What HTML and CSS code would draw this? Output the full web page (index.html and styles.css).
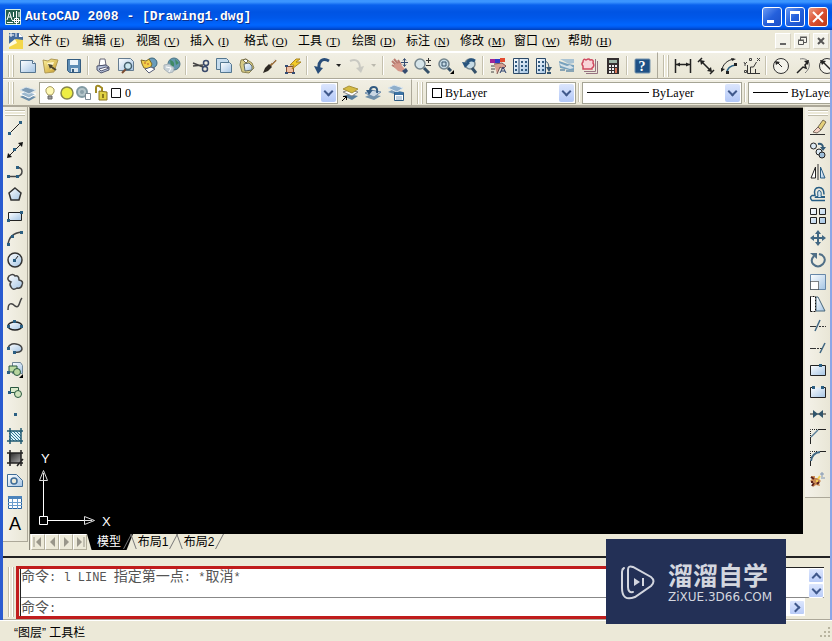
FILE: index.html
```html
<!DOCTYPE html>
<html lang="zh-CN">
<head>
    <meta charset="UTF-8">
    <meta name="viewport" content="width=device-width, initial-scale=1.0">
    <title>AutoCAD 2008 - [Drawing1.dwg]</title>
    <link rel="stylesheet" href="styles.css">
</head>
<body>
    <svg class="defs" width="0" height="0" aria-hidden="true">
        <defs>
            <linearGradient id="sky" x1="0" y1="0" x2="1" y2="1"><stop offset="0" stop-color="#fff"/><stop offset="1" stop-color="#a3c4e4"/></linearGradient>
            <linearGradient id="dark" x1="0" y1="0" x2="1" y2="1"><stop offset="0" stop-color="#222"/><stop offset="1" stop-color="#aaa"/></linearGradient>
            <linearGradient id="gold" x1="0" y1="0" x2="1" y2="1"><stop offset="0" stop-color="#fdf3a0"/><stop offset="1" stop-color="#c79a2a"/></linearGradient>
            <pattern id="hatch" width="3" height="3" patternUnits="userSpaceOnUse"><path d="M0 0l3 3" stroke="#2f7391"/></pattern>
        </defs>
    </svg>
    <div class="window">
        <header class="titlebar">
            <svg width="16" height="16" viewBox="0 0 16 16"><path fill="#27604f" stroke="#d6efe4" d="M.5.5h15v15H.5z"/><path d="M2 11L4.500 3 7 11M3 8h3M8.500 3v5M11.500 2v6M14 3v5M2 13.500h6" stroke="#fff" fill="none"/><path d="M9.500 9.500h4v4h-4z" stroke="#fff" fill="#173f36"/><path d="M11.500 7v9M7 11.500h9" stroke="#fff"/></svg>
            <h1>AutoCAD 2008 - [Drawing1.dwg]</h1>
            <button class="win-btn" aria-label="最小化"><svg width="18" height="18" viewBox="0 0 18 18"><path d="M4 12h7v3H4z" fill="#fff"/></svg></button>
            <button class="win-btn" aria-label="最大化"><svg width="18" height="18" viewBox="0 0 18 18"><path d="M4.500 4.500h9v9h-9z" fill="none" stroke="#fff"/><path d="M4 3h10v3H4z" fill="#fff"/></svg></button>
            <button class="win-btn close" aria-label="关闭"><svg width="18" height="18" viewBox="0 0 18 18"><path d="M4 4l10 10M14 4L4 14" stroke="#fff" stroke-width="2"/></svg></button>
        </header>

        <div class="frame">
            <nav class="menubar">
                <svg class="doc-icon" width="16" height="18" viewBox="0 0 16 18"><path d="M1 1h10l4 4v12H1z" fill="#446b9d"/><path d="M3 0v5M1 3h5M8 1v4" stroke="#fff"/><path d="M1 17v-5l7-5 7 1v9z" fill="#f4d74a"/><path d="M1 12l6-5 2 4-8 4z" fill="#fffbe0"/><path d="M11 1l4 4h-4z" fill="#fff"/></svg>
                <button>文件<span>(<u>F</u>)</span></button>
                <button>编辑<span>(<u>E</u>)</span></button>
                <button>视图<span>(<u>V</u>)</span></button>
                <button>插入<span>(<u>I</u>)</span></button>
                <button>格式<span>(<u>O</u>)</span></button>
                <button>工具<span>(<u>T</u>)</span></button>
                <button>绘图<span>(<u>D</u>)</span></button>
                <button>标注<span>(<u>N</u>)</span></button>
                <button>修改<span>(<u>M</u>)</span></button>
                <button>窗口<span>(<u>W</u>)</span></button>
                <button>帮助<span>(<u>H</u>)</span></button>
                <div class="mdi">
                    <button aria-label="最小化图形"><svg width="14" height="14" viewBox="0 0 14 14"><path d="M4 9h6v2H4z" fill="#666"/></svg></button>
                    <button aria-label="还原图形"><svg width="14" height="14" viewBox="0 0 14 14"><path d="M5.500 6V3.500h6v5H9M3.500 6.500h5v4h-5zM5 3h7M3 6h6" fill="none" stroke="#555"/></svg></button>
                    <button aria-label="关闭图形"><svg width="14" height="14" viewBox="0 0 14 14"><path d="M4 4l6 6M10 4l-6 6" stroke="#555" stroke-width="2"/></svg></button>
                </div>
            </nav>

            <div class="row">
                <div class="toolbar standard">
                    <i class="grip"></i>
                    <button aria-label="新建"><svg viewBox="0 0 18 18"><path d="M1.500 3.500h12l3 3v9h-15z" fill="url(#sky)" stroke="#56758f"/><path d="M13.500 3.500v3h3" fill="#fff" stroke="#56758f"/></svg></button>
                    <button aria-label="打开"><svg viewBox="0 0 18 18"><path d="M1 3l5 1 3-2 7 1-4 12-9 1z" fill="url(#gold)" stroke="#b09a55"/><path d="M5 6l7-1-3 8z" fill="#fff8cf"/><path d="M8 9l6 4" stroke="#4a432c" stroke-width="2"/><path d="M6 7l5 1-3 4z" fill="#4a432c"/></svg></button>
                    <button aria-label="保存"><svg viewBox="0 0 18 18"><path d="M2.500 2.500h13v13h-11l-2-2z" fill="#5e8db5" stroke="#345c80"/><path d="M5 3h8v5H5z" fill="#eef5fa"/><path d="M6 11h7v4H6z" fill="#dce7ef"/><path d="M7 12h2v3H7z" fill="#355b7e"/></svg></button>
                    <i class="sep"></i>
                    <button aria-label="打印"><svg viewBox="0 0 18 18"><path d="M5 9l1-7h5l1 6z" fill="#fff" stroke="#667"/><path d="M3 9l9-1 3 2v3l-8 3-4-3z" fill="#b9c5dc" stroke="#4d536d"/><path d="M5 12l7-2 3 1-8 3z" fill="#fff" stroke="#545872"/></svg></button>
                    <button aria-label="打印预览"><svg viewBox="0 0 18 18"><path d="M1.500 1.500h12l3 3v9h-15z" fill="url(#sky)" stroke="#657c90"/><path d="M9 12l-4 4" stroke="#7a4b31" stroke-width="2"/><circle cx="11" cy="9" r="3.500" fill="#cce7ef" stroke="#46616f" stroke-width="1.500"/></svg></button>
                    <button aria-label="发布"><svg viewBox="0 0 18 18"><circle cx="12" cy="6" r="5" fill="#6b9dbb" stroke="#3c657a"/><path d="M1 3l5 1 3-2 3 5-2 5-6-1-2-4z" fill="#f2cf4a" stroke="#7c6829"/><path d="M4 6h2M7 7h2" stroke="#bb5a2d"/><path d="M5 12l6-2 4 2-6 4z" fill="#fff" stroke="#555b74"/></svg></button>
                    <button aria-label="三维 DWF"><svg viewBox="0 0 18 18"><circle cx="11" cy="7" r="6" fill="#6297ad" stroke="#4b7587"/><path d="M7 3q5 1 4 6l-3 1zM12 2l4 4-3 2z" fill="#3f8a63"/><path d="M1 8l5-1 5 4-1 4-4 1-5-4z" fill="#c9d3d9" stroke="#a9b3b9"/><path d="M3 10l5 1-2 4" fill="none" stroke="#fff"/></svg></button>
                    <i class="sep"></i>
                    <button aria-label="剪切"><svg viewBox="0 0 18 18"><path d="M1 6l10 4M1 9l10-1" stroke="#444" stroke-width="1.500"/><circle cx="14" cy="6" r="2.500" fill="none" stroke="#39496b" stroke-width="1.500"/><circle cx="13" cy="12" r="2.500" fill="none" stroke="#39496b" stroke-width="1.500"/></svg></button>
                    <button aria-label="复制"><svg viewBox="0 0 18 18"><path d="M1.500 1.500h10l2 2v9h-12z" fill="#c6dced" stroke="#547790"/><path d="M5.500 5.500h9l2 2v8h-11z" fill="url(#sky)" stroke="#547790"/></svg></button>
                    <button aria-label="粘贴"><svg viewBox="0 0 18 18"><path d="M3 3l5-1 6 4 2 5-5 5-7-1-2-7z" fill="#d5c985" stroke="#8d8452"/><path d="M6 7l5-1 3 3v4l-7 1z" fill="url(#sky)" stroke="#626c68"/><path d="M5 3l3-1 2 2-2 2z" fill="#fff" stroke="#766d4d"/></svg></button>
                    <button aria-label="特性匹配"><svg viewBox="0 0 18 18"><path d="M15 3l-6 6" stroke="#9b713f" stroke-width="2"/><path d="M8 7l3 3-4 4-5 2 2-5z" fill="#2d2923"/><path d="M11 6l4-4" stroke="#ddd"/></svg></button>
                    <button aria-label="块编辑器"><svg viewBox="0 0 18 18"><path d="M2.500 9.500h7v6h-7z" fill="#f0bea0" stroke="#814c35"/><path d="M1 15h3v2H1zM8 15h3v2H8zM1 8h3v2H1z" fill="#344d75"/><path d="M12 2L6 8h4l-2 4 9-7h-5l4-3z" fill="#f3cb29" stroke="#a98522"/></svg></button>
                    <i class="sep"></i>
                    <button aria-label="放弃"><svg viewBox="0 0 18 18"><path d="M16 4C9 0 5 5 6 12" fill="none" stroke="#284d79" stroke-width="3"/><path d="M1 9l9 2-5 6z" fill="#284d79"/></svg></button>
                    <button class="drop" aria-label="放弃列表"><svg viewBox="0 0 8 18"><path d="M1 7h5l-2 3z" fill="#222"/></svg></button>
                    <button aria-label="重做"><svg viewBox="0 0 18 18"><path d="M2 4c7-3 10 1 10 8" fill="none" stroke="#c9c9c2" stroke-width="2"/><path d="M8 11l8-2-3 7z" fill="#c9c9c2"/></svg></button>
                    <button class="drop" aria-label="重做列表"><svg viewBox="0 0 8 18"><path d="M1 7h5l-2 3z" fill="#bbb9ae"/></svg></button>
                    <i class="sep wide"></i>
                    <button aria-label="实时平移"><svg viewBox="0 0 18 18"><path d="M1 4l5 5M3 2l5 6M7 3l3 5M1 8l5 3" stroke="#b97a70" stroke-width="2"/><path d="M4 7l5-1 3 4 2 2-3 3-4-1-4-4z" fill="#d59789"/><path d="M11 14l4-3 2 3-3 3z" fill="#344b70"/><path d="M13.500 2v7M10 5.500h7M12 3.500l1.500-2 1.500 2M12 7.500l1.500 2 1.500-2" fill="none" stroke="#344b70"/></svg></button>
                    <button aria-label="实时缩放"><svg viewBox="0 0 18 18"><circle cx="6" cy="7" r="5" fill="#d5e4e9" stroke="#75868e" stroke-width="1.500"/><path d="M10 11l5 5" stroke="#345069" stroke-width="3"/><path d="M14.500 1v5M12 3.500h5M12 8.500h5" stroke="#333"/></svg></button>
                    <button aria-label="窗口缩放"><svg viewBox="0 0 18 18"><circle cx="7" cy="7" r="5" fill="#c6dbe5" stroke="#75868e" stroke-width="1.500"/><path d="M5 5h4v4H5z" fill="none" stroke="#345069"/><path d="M11 11l3 3" stroke="#345069" stroke-width="3"/><path d="M17 13v4h-4z" fill="#000"/></svg></button>
                    <button aria-label="缩放上一个"><svg viewBox="0 0 18 18"><circle cx="10" cy="7" r="5" fill="#c6dbe5" stroke="#75868e" stroke-width="1.500"/><path d="M12 11l4 5" stroke="#345069" stroke-width="3"/><path d="M15 4Q10 1 7 6" fill="none" stroke="#28547d" stroke-width="3"/><path d="M2 5l8 1-5 5z" fill="#28547d"/></svg></button>
                    <i class="sep"></i>
                    <button aria-label="特性"><svg viewBox="0 0 18 18"><path d="M1 2h5v4H1z" fill="#a02598"/><path d="M6 2h5v4H6z" fill="#303cc8"/><path d="M11 1h5v4h-5z" fill="#e34b2f"/><path d="M2 9h5M2 12h4M2 15h3" stroke="#444"/><path d="M5 7l8-1 4 3-3 3-3-2-3 7" fill="#d7a091" stroke="#795755"/><path d="M11 16l3-6 3 6M12 14h4" fill="none" stroke="#273c6c"/></svg></button>
                    <button aria-label="设计中心"><svg viewBox="0 0 18 18"><path d="M1.500 1.500h15v15h-15z" fill="url(#sky)" stroke="#2b4968"/><path d="M7 2v15" stroke="#2b4968"/><path d="M3 4h2v2H3zM3 8h2v2H3zM3 12h2v2H3zM9 4h2v2H9zM13 4h2v2h-2zM9 8h2v2H9zM13 8h2v2h-2zM9 12h2v2H9zM13 12h2v2h-2z" fill="#315b80"/></svg></button>
                    <button aria-label="工具选项板"><svg viewBox="0 0 18 18"><path d="M1.500 1.500h9v15h-9z" fill="url(#sky)" stroke="#2b4968"/><path d="M3 4h2v2H3zM3 8h2v2H3zM3 12h2v2H3zM7 4h2v2H7zM7 8h2v2H7zM7 12h2v2H7z" fill="#315b80"/><path d="M10 4q4 1 4 8" fill="none" stroke="#365671"/><path d="M11 10l3 5 3-5zM12 15h4v2h-4z" fill="#365671"/></svg></button>
                    <button aria-label="图纸集"><svg viewBox="0 0 18 18"><path d="M2 2h14v4l-5 1z" fill="#a9c3d3"/><path d="M1 4l9 3 6 1v6L2 11z" fill="#77a1bd"/><path d="M1 6l8 3 3-1 4 3-4 1-9-3z" fill="#d6e1e7"/><path d="M8 14h8M2 13h5" stroke="#88a4b4" stroke-width="2"/></svg></button>
                    <button aria-label="标记集"><svg viewBox="0 0 18 18"><path d="M5 16.500h11.500V4" fill="none" stroke="#967381"/><path d="M3 14.500h11.500V2" fill="none" stroke="#967381"/><path d="M2 12V9q-2-2 0-4 0-4 3-2 3-2 4 0 4-1 3 3 2 3-1 5v1z" fill="#f9d5d9" stroke="#cf4a60" stroke-width="1.500"/></svg></button>
                    <button aria-label="快速计算器"><svg viewBox="0 0 18 18"><path d="M3 1h12v16H3z" fill="#352f30"/><path d="M5 3h8v3H5z" fill="#9db5a6"/><path d="M5 8h2v2H5zM8 8h2v2H8zM11 8h2v2h-2zM5 11h2v2H5zM8 11h2v2H8zM5 14h2v2H5zM8 14h2v2H8z" fill="#eee"/><path d="M11 11h2v5h-2z" fill="#d87357"/></svg></button>
                    <i class="sep"></i>
                    <button aria-label="帮助"><svg viewBox="0 0 18 18"><rect x="2" y="2" width="15" height="14" rx="1" fill="#1e5085" stroke="#7493ad"/><text x="9" y="14" text-anchor="middle" class="help-mark">?</text></svg></button>
                </div>
                <div class="toolbar dimension">
                    <i class="grip"></i>
                    <button aria-label="线性标注"><svg viewBox="0 0 18 18"><path d="M1.500 2v14M16.500 2v14M2 7.500h14" stroke="#222" stroke-width="1.500"/><path d="M2 7.500l4-2v4zM16 7.500l-4-2v4z" fill="#222"/></svg></button>
                    <button aria-label="对齐标注"><svg viewBox="0 0 18 18"><path d="M1 5l4-4M13 17l4-4M4 4l10 10" stroke="#222" stroke-width="1.500"/><path d="M3 3l5 1-4 4zM15 15l-5-1 4-4z" fill="#222"/></svg></button>
                    <button aria-label="弧长标注"><svg viewBox="0 0 18 18"><path d="M2 14C2 8 7 3 14 2" fill="none" stroke="#222"/><path d="M7 16q0-7 9-8" fill="none" stroke="#286083" stroke-width="1.500"/><path d="M1 15l0-4 4 1zM16 2l-5-1 1 3zM6 14h3v3H6zM14 6h3v3h-3z" fill="#222"/></svg></button>
                    <button aria-label="坐标标注"><svg viewBox="0 0 18 18"><path d="M4.500 8v8.500H17M7.500 16v-6h3l3-5M12.500 12v4" fill="none" stroke="#333"/><path d="M1 5l1 2 2-2M2 7v2M1.500 13.500h2v2h-2zM6.500 1.500h2v2h-2zM14 1l3 3M17 1l-3 3" fill="none" stroke="#444"/></svg></button>
                    <i class="sep"></i>
                    <button aria-label="半径标注"><svg viewBox="0 0 18 18"><circle cx="9" cy="9" r="7.500" fill="#f4f3eb" stroke="#333"/><path d="M10 10L5 5" stroke="#222"/><path d="M3 4l5 1-4 3z" fill="#222"/></svg></button>
                    <button aria-label="折弯标注"><svg viewBox="0 0 18 18"><path d="M5 2c9-2 13 7 5 14" fill="none" stroke="#777"/><path d="M2 16l6-6 3 1-1-3 3-3" fill="none" stroke="#222" stroke-width="1.500"/><path d="M14 3l-5 1 4 4z" fill="#222"/></svg></button>
                    <button aria-label="直径标注"><svg viewBox="0 0 18 18"><circle cx="9" cy="9" r="7.500" fill="#f4f3eb" stroke="#333"/><path d="M4 4l10 10" stroke="#222" stroke-width="1.500"/><path d="M2 3l6 1-4 4z" fill="#222"/></svg></button>
                </div>
            </div>

            <div class="row">
                <div class="toolbar layers">
                    <i class="grip"></i>
                    <button aria-label="图层特性管理器"><svg viewBox="0 0 18 18"><path d="M1 13l6-3 10 3-7 4z" fill="#6a8daa"/><path d="M1 10l6-3 10 3-7 4z" fill="#9db9cf" stroke="#fff"/><path d="M1 6l6-3 10 3-7 4z" fill="#7f9db7" stroke="#dce7ee"/></svg></button>
                    <div class="combo layer-combo">
                        <svg width="81" height="18" viewBox="0 0 81 18" aria-hidden="true">
                            <path d="M7 11q-3-3-2-6 4-5 8 0 1 3-2 6z" fill="#fff9b5" stroke="#a79c62"/><path d="M7 12h4v3H7z" fill="#999" stroke="#666"/>
                            <circle cx="26" cy="9" r="6" fill="#eeee43" stroke="#86864b" stroke-width="1.500"/>
                            <circle cx="41" cy="8" r="5" fill="#b5c6ca" stroke="#819aa2" stroke-width="2"/><circle cx="41" cy="8" r="2" fill="#8aa0a8"/><path d="M44.500 9.500h5v6h-5z" fill="#fff" stroke="#7b8992"/>
                            <path d="M55 9V4q0-3 3-2l3 2v3" fill="none" stroke="#a08a22" stroke-width="2"/><path d="M58 7l8 1v8h-8z" fill="#e1d244" stroke="#8b7620"/><path d="M61 10h2v4h-2z" fill="#8a7a1e"/>
                            <path d="M70.500 4.500h9v9h-9z" fill="#fff" stroke="#111"/>
                        </svg>
                        <select aria-label="图层"><option>0</option></select>
                        <span class="arrow"></span>
                    </div>
                    <button aria-label="将对象的图层置为当前"><svg viewBox="0 0 18 18"><path d="M2 12l6-2 9 2-6 4z" fill="#597f9d"/><path d="M2 8l6-2 9 2-6 4z" fill="#fff" stroke="#888"/><path d="M2 5l6-3 9 3-6 4z" fill="#d5bb43" stroke="#a8923c"/><path d="M1 17l4-4M2 12.500h3.500V16" fill="none" stroke="#000"/></svg></button>
                    <button aria-label="上一个图层"><svg viewBox="0 0 18 18"><path d="M1 13l6-3 10 2-7 4z" fill="#7191aa"/><path d="M1 9l6-3 10 2-7 5z" fill="#cad8e4" stroke="#6f8dab"/><path d="M13 9q1-6-3-6-4 0-4 4" fill="none" stroke="#315a81" stroke-width="2"/><path d="M2 6h7l-4 5z" fill="#315a81"/></svg></button>
                    <button aria-label="图层状态管理器"><svg viewBox="0 0 18 18"><path d="M1 8l6-3 9 3-6 3z" fill="#7a9bb6"/><path d="M1 4l6-3 9 3-6 4z" fill="#8eaecb" stroke="#dce7ef"/><path d="M7.500 8.500h9v8h-9z" fill="#fff" stroke="#2c5a82"/><path d="M8 8h8v3H8z" fill="#3b73a4"/><path d="M9 13h6M9 15h6" stroke="#83a5c0"/></svg></button>
                </div>
                <div class="toolbar properties">
                    <i class="grip"></i>
                    <div class="combo">
                        <i class="swatch"></i>
                        <select aria-label="颜色控制"><option>ByLayer</option></select>
                        <span class="arrow"></span>
                    </div>
                    <i class="sep"></i>
                    <div class="combo linetype">
                        <i class="line"></i>
                        <select aria-label="线型控制"><option>ByLayer</option></select>
                        <span class="arrow"></span>
                    </div>
                    <i class="sep"></i>
                    <div class="combo">
                        <i class="line short"></i>
                        <select aria-label="线宽控制"><option>ByLayer</option></select>
                    </div>
                </div>
            </div>

            <main class="workspace">
                <div class="side left">
                    <i class="grip"></i>
                    <button aria-label="直线"><svg viewBox="0 0 18 18"><path d="M3 15L15 3" stroke="#222"/><path d="M2 13h3v3H2zM13 2h3v3h-3z" fill="#2b5f82"/></svg></button>
                    <button aria-label="构造线"><svg viewBox="0 0 18 18"><path d="M2 16L16 2" stroke="#222"/><path d="M1 17l1-5 4 4zM17 1l-5 1 4 4z" fill="#111"/><path d="M7 7h3v3H7z" fill="#2b5f82"/></svg></button>
                    <button aria-label="多段线"><svg viewBox="0 0 18 18"><path d="M3 13.500h8M11 4.500q5 0 5 4t-5 5" fill="none" stroke="#444" stroke-width="1.500"/><path d="M1 12h3v3H1zM10 12h3v3h-3zM10 3h3v3h-3z" fill="#2b5f82"/></svg></button>
                    <button aria-label="正多边形"><svg viewBox="0 0 18 18"><path d="M9 3l6 5-2 7H5L3 8z" fill="url(#sky)" stroke="#333" stroke-width="1.500"/></svg></button>
                    <button aria-label="矩形"><svg viewBox="0 0 18 18"><path d="M2.500 5.500h13v8h-13z" fill="url(#sky)" stroke="#222"/><path d="M1 12h3v3H1zM14 4h3v3h-3z" fill="#2b5f82"/></svg></button>
                    <button aria-label="圆弧"><svg viewBox="0 0 18 18"><path d="M2 16Q3 4 16 3" fill="none" stroke="#444" stroke-width="1.500"/><path d="M1 14h3v3H1zM5 6h3v3H5zM14 2h3v3h-3z" fill="#2b5f82"/></svg></button>
                    <button aria-label="圆"><svg viewBox="0 0 18 18"><circle cx="9" cy="9" r="7" fill="url(#sky)" stroke="#333" stroke-width="1.500"/><path d="M9 9l3-4" stroke="#222"/><path d="M7 8h3v3H7z" fill="#2b5f82"/></svg></button>
                    <button aria-label="修订云线"><svg viewBox="0 0 18 18"><path d="M5 9Q0 7 3 3q4-3 6 0 4-1 4 4 5 1 3 5-1 4-5 3-4 3-6-1-2-3 0-5z" fill="url(#sky)" stroke="#444" stroke-width="1.500"/></svg></button>
                    <button aria-label="样条曲线"><svg viewBox="0 0 18 18"><path d="M2 15c0-8 4-7 7-4 5 3 4-5 7-8" fill="none" stroke="#444" stroke-width="1.500"/></svg></button>
                    <button aria-label="椭圆"><svg viewBox="0 0 18 18"><ellipse cx="9" cy="9" rx="7" ry="4" fill="url(#sky)" stroke="#222" stroke-width="1.500"/><path d="M1 8h3v3H1zM7 3h3v3H7zM14 8h3v3h-3z" fill="#2b5f82"/></svg></button>
                    <button aria-label="椭圆弧"><svg viewBox="0 0 18 18"><path d="M2 9q2-5 8-4 6 1 6 5-1 4-7 3z" fill="url(#sky)"/><path d="M2 9q2-5 8-4 6 1 6 5-1 4-7 3" fill="none" stroke="#444" stroke-width="1.500"/><path d="M1 8h3v3H1zM7 12h3v3H7z" fill="#2b5f82"/></svg></button>
                    <button aria-label="插入块"><svg viewBox="0 0 18 18"><path d="M6.500 1.500h8l2 3v8h-10z" fill="url(#sky)" stroke="#718697"/><path d="M3 5h8v6H3z" fill="#bddca3" stroke="#2a5940"/><circle cx="11" cy="11" r="3.500" fill="#b7d59e" stroke="#2a5940"/><path d="M1 10h3v3H1z" fill="#2b5f82"/><path d="M17 13v4h-4z" fill="#000"/></svg></button>
                    <button aria-label="创建块"><svg viewBox="0 0 18 18"><path d="M4.500 4.500h8v5h-8z" fill="#dbeacb" stroke="#2a5940"/><circle cx="12" cy="11" r="3.500" fill="#cfe3bd" stroke="#2a5940"/><path d="M2 8h3v3H2z" fill="#2b5f82"/></svg></button>
                    <button aria-label="点"><svg viewBox="0 0 18 18"><path d="M8 8h3v3H8z" fill="#2b5f82"/></svg></button>
                    <button aria-label="图案填充"><svg viewBox="0 0 18 18"><path d="M3 4h12v10H3z" fill="#def2f9"/><path d="M3 4h12v10H3z" fill="url(#hatch)"/><path d="M1 4h16M1 14h16M4 1v16M15 1v16" stroke="#205971" stroke-width="1.500"/></svg></button>
                    <button aria-label="渐变色"><svg viewBox="0 0 18 18"><path d="M3 4h12v10H3z" fill="url(#dark)"/><path d="M1 4h16M1 14h16M4 1v16M15 1v16M11 17l6-7" stroke="#222" stroke-width="1.500"/></svg></button>
                    <button aria-label="面域"><svg viewBox="0 0 18 18"><path d="M1.500 3.500h9l6 6v6h-15z" fill="url(#sky)" stroke="#3e6c97"/><circle cx="8" cy="10" r="3" fill="#ece9d8" stroke="#3e6c97" stroke-width="1.500"/></svg></button>
                    <button aria-label="表格"><svg viewBox="0 0 18 18"><path d="M2.500 3.500h13v12h-13z" fill="#fff" stroke="#28639f"/><path d="M2 3h14v3H2z" fill="#4b83bb"/><path d="M2 9.500h14M2 12.500h14M6.500 6v10M11.500 6v10" stroke="#6b9dcc"/></svg></button>
                    <button class="text-tool" aria-label="多行文字">A</button>
                </div>

                <section class="document">
                    <div class="canvas">
                        <svg class="ucs" width="84" height="78" viewBox="0 0 84 78">
                            <path d="M9.500 63.500h8v8h-8zM13.500 63V24M18 67.500h36" fill="none" stroke="#fff"/>
                            <path d="M9.500 27.500h8l-4-10zM54.500 63.500v8l10-4zM13.500 27V20M54 67.500h8" fill="none" stroke="#ddd"/>
                            <text x="11" y="10">Y</text>
                            <text x="72" y="73">X</text>
                        </svg>
                    </div>
                    <div class="tabs">
                        <button class="nav" aria-label="第一个"><svg viewBox="0 0 12 12"><path d="M2 1v10" stroke="#99968a"/><path d="M9 1v10L4 6z" fill="#99968a"/></svg></button>
                        <button class="nav" aria-label="上一个"><svg viewBox="0 0 12 12"><path d="M9 1v10L4 6z" fill="#99968a"/></svg></button>
                        <button class="nav" aria-label="下一个"><svg viewBox="0 0 12 12"><path d="M4 1v10l5-5z" fill="#99968a"/></svg></button>
                        <button class="nav" aria-label="最后一个"><svg viewBox="0 0 12 12"><path d="M10 1v10" stroke="#99968a"/><path d="M3 1v10l5-5z" fill="#99968a"/></svg></button>
                        <button class="tab active">模型</button>
                        <button class="tab">布局1</button>
                        <button class="tab">布局2</button>
                    </div>
                </section>

                <div class="side right">
                    <i class="grip"></i>
                    <button aria-label="删除"><svg viewBox="0 0 18 18"><path d="M1 15.500h15" stroke="#333"/><path d="M9 8l5-7 3 2-5 8z" fill="#e3cf7a" stroke="#776b50"/><path d="M9 8l3 3-4 3-4-1z" fill="#f5d3c6" stroke="#77675b"/></svg></button>
                    <button aria-label="复制对象"><svg viewBox="0 0 18 18"><circle cx="4.500" cy="5" r="3" fill="#dceaf4" stroke="#222"/><circle cx="10" cy="11" r="3" fill="#dceaf4" stroke="#222"/><circle cx="13" cy="14" r="3" fill="#9dbed9" stroke="#222"/><path d="M9 3q5-1 5 4" fill="none" stroke="#325a77" stroke-width="2"/><path d="M11 6h6l-3 4z" fill="#325a77"/></svg></button>
                    <button aria-label="镜像"><svg viewBox="0 0 18 18"><path d="M6.500 4v11H2z" fill="#fff" stroke="#222"/><path d="M11.500 4v11H16z" fill="url(#sky)" stroke="#285c83"/><path d="M9 1v16" stroke="#333"/></svg></button>
                    <button aria-label="偏移"><svg viewBox="0 0 18 18"><path d="M16 15.500H3q-3-3 0-5h3q-2-8 4-8 5 0 5 7" fill="none" stroke="#265d84" stroke-width="1.500"/><path d="M16 12.500H6q-1-1 3-1-1-6 1-6 3 0 2 6h4" fill="#d6e8f3" stroke="#265d84"/></svg></button>
                    <button aria-label="阵列"><svg viewBox="0 0 18 18"><path d="M1.500 1.500h6v6h-6zM10.500 1.500h6v6h-6zM1.500 10.500h6v6h-6zM10.500 10.500h6v6h-6z" fill="url(#sky)" stroke="#222"/></svg></button>
                    <button aria-label="移动"><svg viewBox="0 0 18 18"><path d="M9 3v12M3 9h12" stroke="#416783" stroke-width="2"/><path d="M9 1l3 4H6zM9 17l3-4H6zM1 9l4-3v6zM17 9l-4-3v6z" fill="#416783"/></svg></button>
                    <button aria-label="旋转"><svg viewBox="0 0 18 18"><path d="M5 5q-4 4-1 8 5 5 10 0 4-5-1-9l-3-1" fill="none" stroke="#506f87" stroke-width="2"/><path d="M1 2h7l0 6z" fill="#506f87"/></svg></button>
                    <button aria-label="缩放"><svg viewBox="0 0 18 18"><path d="M1.500 1.500h15v15h-15z" fill="url(#sky)" stroke="#6787a8"/><path d="M1.500 8.500h8v8h-8z" fill="#fff" stroke="#111" stroke-dasharray="1 1"/></svg></button>
                    <button aria-label="拉伸"><svg viewBox="0 0 18 18"><path d="M7 2h2l7 14H7z" fill="url(#sky)" stroke="#47677b"/><path d="M1.500 16.500h5v-15h-5z" fill="#fff" stroke="#111" stroke-dasharray="2 1"/><path d="M1.500 2v14" stroke="#111"/></svg></button>
                    <button aria-label="修剪"><svg viewBox="0 0 18 18"><path d="M1 9.500h6" stroke="#333"/><path d="M10 9.500h7" stroke="#333" stroke-dasharray="2 1"/><path d="M6 14l5-11" stroke="#416783" stroke-width="1.500"/></svg></button>
                    <button aria-label="延伸"><svg viewBox="0 0 18 18"><path d="M1 9.500h4" stroke="#333"/><path d="M5 9.500h8" stroke="#333" stroke-dasharray="2 1"/><path d="M11 14l5-10" stroke="#416783" stroke-width="1.500"/></svg></button>
                    <button aria-label="打断于点"><svg viewBox="0 0 18 18"><path d="M1.500 4.500h15v10h-15z" fill="url(#sky)" stroke="#222"/><path d="M10 3h3v3h-3z" fill="#2b5f82"/></svg></button>
                    <button aria-label="打断"><svg viewBox="0 0 18 18"><path d="M4 4.500H1.500v10h15v-10H14" fill="url(#sky)" stroke="#222"/><path d="M3 3h3v3H3zM12 3h3v3h-3z" fill="#2b5f82"/></svg></button>
                    <button aria-label="合并"><svg viewBox="0 0 18 18"><path d="M1 9h16" stroke="#222"/><path d="M4 5v8l5-4zM14 5v8L9 9z" fill="#31556b"/></svg></button>
                    <button aria-label="倒角"><svg viewBox="0 0 18 18"><path d="M1.500 17v-7M9 2.500h8" fill="none" stroke="#222"/><path d="M2 10l7-7" stroke="#5a7e97" stroke-width="1.500"/><path d="M1.500 9V2.500H8" fill="none" stroke="#222" stroke-dasharray="1 1"/></svg></button>
                    <button aria-label="圆角"><svg viewBox="0 0 18 18"><path d="M1.500 17v-5M11 2.500h6" fill="none" stroke="#222"/><path d="M2 12q1-8 9-9" fill="none" stroke="#416783" stroke-width="2"/><path d="M1.500 9V2.500H9" fill="none" stroke="#222" stroke-dasharray="1 1"/></svg></button>
                    <button aria-label="分解"><svg viewBox="0 0 18 18"><path d="M2 5h4v2h3l3 3-2 2 1 3-4-1-3 2 0-4-3-2 2-2z" fill="#c98a54"/><path d="M2 6l3 2M8 13l2-2M3 15l2-3M2 11h2" stroke="#5b211b" stroke-width="2"/><path d="M9 8l2-3M7 10h2" stroke="#f3cf51" stroke-width="2"/><path d="M11 3h4M13 1v5M12 7h4" stroke="#8096b3"/></svg></button>
                </div>
            </main>

            <section class="command">
                <i class="grip"></i>
                <div class="console">
                    <div class="history">
                        <output>命令<span>: l LINE </span>指定第一点<span>: *</span>取消<span>*</span></output>
                        <div class="scroll">
                            <button class="xp up" aria-label="向上滚动"></button>
                            <button class="xp" aria-label="向下滚动"></button>
                        </div>
                    </div>
                    <div class="prompt">
                        <label for="cmd">命令<span>:</span></label>
                        <input id="cmd" type="text">
                        <button class="xp next" aria-label="向右滚动"></button>
                    </div>
                </div>
                <div class="highlight"></div>
            </section>
        </div>

        <footer class="statusbar">
            <span>“图层” 工具栏</span>
            <svg width="14" height="14" viewBox="0 0 14 14"><path d="M11 3h2v2h-2zM7 7h2v2H7zM11 7h2v2h-2zM3 11h2v2H3zM7 11h2v2H7zM11 11h2v2h-2z" fill="#b8b49f"/></svg>
        </footer>

        <aside class="watermark">
            <svg width="36" height="36" viewBox="0 0 36 36"><path d="M13 28Q8 29 8 23V6Q8 1 13 3L31 13Q36 17 31 22L15 33Q2 38 2 24V8Q2 5 4 4" fill="none" stroke="#d3d6df" stroke-width="2" stroke-linecap="round"/><path d="M14 14v8l6-4zM22 14h2v8h-2z" fill="#d3d6df"/></svg>
            <div>
                <strong>溜溜自学</strong>
                <span>ZiXUE.3D66.COM</span>
            </div>
        </aside>
    </div>
</body>
</html>
```
FILE: styles.css
```css
* {
    box-sizing: border-box;
}
body {
    margin: 0;
    background: #ece9d8;
    color: #000;
    font: 12px "Liberation Sans", "Noto Sans CJK SC", sans-serif;
}
button {
    padding: 0;
    border: 0;
    background: none;
    color: inherit;
    font: inherit;
}
svg {
    display: block;
    flex: none;
}
.defs {
    position: absolute;
}
.window {
    position: relative;
    display: flex;
    flex-direction: column;
    height: 100vh;
    min-height: 400px;
    overflow: hidden;
}

/* title bar */
.titlebar {
    display: flex;
    align-items: center;
    flex: none;
    gap: 3px;
    height: 30px;
    padding: 3px 4px 0 5px;
    background: linear-gradient(#3b95ff 0, #3b95ff 2px, #0a62ee 5px, #0054e3 12px, #0058ea 18px, #0066ff 25px, #005af0 27px, #003fb8 30px);
}
.titlebar h1 {
    flex: 1;
    margin: 0 0 0 1px;
    color: #fff;
    font: bold 13px "Liberation Mono", monospace;
    text-shadow: 1px 1px #0a318f;
    white-space: nowrap;
}
.win-btn {
    width: 20px;
    height: 20px;
    border: 1px solid #fff;
    border-radius: 3px;
    background: linear-gradient(135deg, #6b9bf5, #2460dc 50%, #1c50c8);
}
.win-btn.close {
    background: linear-gradient(135deg, #eb9c84, #dc5030 50%, #bf3a16);
}

.frame {
    display: flex;
    flex-direction: column;
    flex: 1;
    min-height: 0;
    border-left: 3px solid #2a5bd0;
    border-right: 2px solid #8ca6e6;
}

/* menu */
.menubar {
    display: flex;
    align-items: center;
    flex: none;
    height: 22px;
    padding: 0 1px 0 5px;
    border-bottom: 1px solid #fff;
}
.doc-icon {
    margin-right: 4px;
}
.menubar > button {
    flex: none;
    width: 54px;
    text-align: left;
    line-height: 16px;
    white-space: nowrap;
}
.menubar > button span {
    margin-left: 4px;
    font-family: "Liberation Serif", serif;
    font-size: 11px;
}
.mdi {
    display: flex;
    gap: 3px;
    margin-left: auto;
}
.mdi button {
    display: grid;
    place-items: center;
    width: 16px;
    height: 16px;
    border: 1px solid #fff;
    border-right-color: #d6d2c2;
    border-bottom-color: #d6d2c2;
    background: #f3f2ea;
}

/* toolbars */
.row {
    display: flex;
    flex: none;
    height: 27px;
    overflow: hidden;
}
.toolbar {
    display: flex;
    align-items: center;
    flex: none;
    padding: 0 4px 0 5px;
    border-top: 1px solid #fff;
    border-right: 1px solid #aca899;
    border-bottom: 1px solid #aca899;
    background: linear-gradient(#f1efe4, #e9e6d5);
}
.toolbar:last-child {
    border-right: 0;
}
.toolbar button {
    display: flex;
    justify-content: center;
    flex: none;
    width: 23px;
}
.toolbar button svg,
.side button svg {
    width: 18px;
    height: 18px;
}
.toolbar button.drop {
    width: 12px;
}
.toolbar button.drop svg {
    width: 8px;
}
.grip {
    flex: none;
    width: 6px;
    height: 22px;
    margin-right: 2px;
    border: solid #c1bda9;
    border-width: 0 1px;
    background: linear-gradient(90deg, #fff 1px, #ece9d8 1px, #ece9d8 3px, #fff 3px);
}
.sep {
    flex: none;
    width: 6px;
    height: 19px;
    background: linear-gradient(90deg, transparent 2px, #c5c1ae 2px, #c5c1ae 3px, #fff 3px, #fff 4px, transparent 4px);
}
.sep.wide {
    width: 8px;
}
.help-mark {
    fill: #fff;
    font: bold 14px "Liberation Serif", serif;
}
.combo {
    display: flex;
    align-items: center;
    flex: none;
    width: 150px;
    height: 22px;
    padding: 1px;
    border: 1px solid #a5a494;
    background: #fff;
}
.combo select {
    flex: 1;
    min-width: 0;
    padding: 0 3px;
    border: 0;
    appearance: none;
    background: none;
    color: #000;
    font: 12px "Liberation Serif", serif;
}
.layer-combo {
    width: 299px;
}
.arrow {
    display: grid;
    place-items: center;
    flex: none;
    width: 15px;
    height: 18px;
    border-radius: 2px;
    background: linear-gradient(#dce6fd, #b3c8f7);
}
.arrow::after,
.xp::after {
    content: "";
    width: 5px;
    height: 5px;
    margin-top: -3px;
    border: solid #40598c;
    border-width: 0 2px 2px 0;
    transform: rotate(45deg);
}
.swatch {
    width: 10px;
    height: 10px;
    margin-left: 4px;
    border: 1px solid #000;
}
.properties .grip {
    margin-right: 3px;
}
.linetype {
    width: 160px;
}
.line {
    flex: none;
    width: 62px;
    height: 1px;
    margin-left: 3px;
    background: #000;
}
.line.short {
    width: 35px;
}

/* drawing area */
.workspace {
    display: flex;
    flex: 1;
    min-height: 0;
    border-top: 1px solid #aca899;
}
.side {
    display: flex;
    flex-direction: column;
    align-items: center;
    align-self: flex-start;
    flex: none;
    width: 25px;
    padding: 3px 0 6px;
    border-right: 1px solid #aca899;
    border-bottom: 1px solid #aca899;
    background: linear-gradient(90deg, #f4f2e9, #e9e6d6);
}
.side.right {
    border-right: 0;
}
.side .grip {
    width: 20px;
    height: 6px;
    margin: 0 0 1px;
    border-width: 1px 0;
    background: linear-gradient(#fff 1px, #ece9d8 1px, #ece9d8 3px, #fff 3px);
}
.side button {
    display: grid;
    place-items: center;
    width: 22px;
    height: 22px;
}
.side .text-tool {
    font: 18px/22px "Liberation Sans", sans-serif;
}
.document {
    display: flex;
    flex-direction: column;
    flex: 1;
    min-width: 0;
    margin: 0 2px 6px 1px;
    border: solid #8d8a7c;
    border-width: 1px 0 0 1px;
}
.canvas {
    display: flex;
    align-items: flex-end;
    flex: 1;
    min-height: 0;
    padding-bottom: 3px;
    background: #000;
}
.ucs text {
    fill: #fff;
    font: 13px "Liberation Sans", sans-serif;
}
.tabs {
    display: flex;
    flex: none;
    height: 16px;
    padding-left: 1px;
}
.nav {
    display: grid;
    place-items: center;
    width: 14px;
    border: 1px solid #fff;
    border-right-color: #b3af9c;
    border-bottom-color: #b3af9c;
}
.nav svg {
    width: 12px;
    height: 12px;
}
.tab {
    position: relative;
    width: 46px;
    padding-right: 6px;
    line-height: 15px;
}
.tab::before,
.tab::after {
    content: "";
    position: absolute;
    top: 0;
    bottom: 1px;
    left: 0;
    width: 5px;
    border-left: 1px solid #777;
    transform: skewX(20deg);
}
.tab::after {
    right: 0;
    left: auto;
    transform: skewX(-28deg);
}
.tab.active {
    padding-right: 2px;
    background: #000;
    color: #fff;
    clip-path: polygon(0 0, 100% 0, 86% 100%, 10% 100%);
}

/* command line */
.command {
    position: relative;
    display: flex;
    flex: none;
    height: 64px;
    padding: 9px 6px 3px 5px;
    border-top: 2px solid #222;
    border-bottom: 1px solid #aca899;
}
.command > .grip {
    height: 50px;
    margin-right: 6px;
}
.console {
    display: flex;
    flex-direction: column;
    flex: 1;
    min-width: 0;
    border: solid #222;
    border-width: 1px 0 0 1px;
    font-size: 14px;
    color: #555;
}
.console span {
    font: 12px "Liberation Mono", monospace;
    white-space: pre;
}
.history {
    display: flex;
    justify-content: space-between;
    height: 30px;
    border-bottom: 1px solid #888;
    background: #fff;
    line-height: 16px;
}
.prompt {
    display: flex;
    align-items: center;
    height: 19px;
    margin-right: 19px;
    background: #fff;
    line-height: 16px;
}
.prompt input {
    flex: 1;
    min-width: 0;
    height: 16px;
    border: 0;
    outline: 0;
    background: none;
    font: 12px "Liberation Mono", monospace;
}
.xp {
    display: grid;
    place-items: center;
    flex: none;
    width: 16px;
    height: 15px;
    border: 1px solid #fff;
    border-radius: 2px;
    background: linear-gradient(#dce6fd, #b9ccf8);
}
.xp.up::after {
    margin: 3px 0 0;
    transform: rotate(225deg);
}
.xp.next::after {
    margin: 0 3px 0 0;
    transform: rotate(-45deg);
}
.highlight {
    position: absolute;
    inset: 8px 60px 0 13px;
    border: 3px solid #c01c1c;
    pointer-events: none;
}
.statusbar {
    display: flex;
    align-items: center;
    justify-content: space-between;
    flex: none;
    height: 21px;
    padding: 0 1px 0 14px;
    border-top: 1px solid #fff;
}

/* site badge over the lower corner */
.watermark {
    position: absolute;
    right: 46px;
    bottom: 17px;
    display: flex;
    align-items: center;
    gap: 12px;
    width: 180px;
    height: 85px;
    padding-left: 14px;
    background: #233056;
    color: #d3d6df;
}
.watermark strong,
.watermark span {
    display: block;
    white-space: nowrap;
}
.watermark strong {
    font: bold 25px/30px "Noto Sans CJK SC", sans-serif;
}
.watermark span {
    font: 12px/16px "DejaVu Sans", sans-serif;
}
```
